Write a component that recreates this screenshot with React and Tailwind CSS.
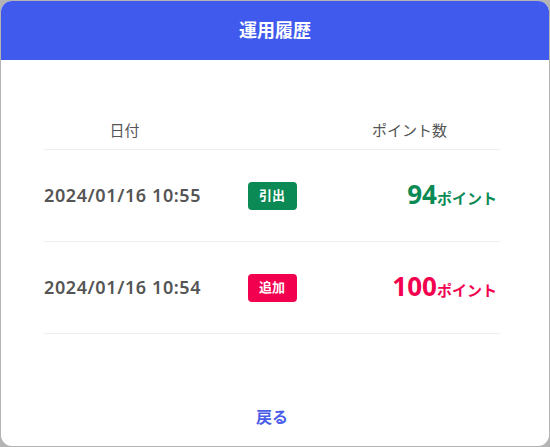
import React from 'react';

const rows = [
  { date: '2024/01/16 10:55', type: '引出', points: 94, tone: 'green' },
  { date: '2024/01/16 10:54', type: '追加', points: 100, tone: 'red' },
];

const font = { fontFamily: '"Noto Sans", "Noto Sans CJK JP", sans-serif' };

const App = () => {
  return (
    <div className="h-[447px] w-[550px] bg-[#b4b4b4] p-px" style={font}>
      <div className="flex h-full flex-col overflow-hidden rounded-[11px] bg-white">
        {/* Header */}
        <div className="flex h-[59px] shrink-0 items-center justify-center bg-[#405aee]">
          <h1 className="text-[18px] font-bold text-white">運用履歴</h1>
        </div>

        {/* Table */}
        <div className="pl-[43px] pr-[49px] pt-[59px]">
          <div className="grid grid-cols-[161px_134px_1fr] border-b border-[#efefef] pb-[8px] text-[15px] text-[#555]">
            <div className="text-center leading-[22px]">日付</div>
            <div />
            <div className="pr-5 text-center leading-[22px]">ポイント数</div>
          </div>
          {rows.map((row) => (
            <div
              key={row.date}
              className="grid h-[92px] grid-cols-[161px_134px_1fr] items-center border-b border-[#efefef]"
            >
              <div className="whitespace-nowrap text-[18px] font-semibold tracking-[0.6px] text-[#555]">{row.date}</div>
              <div className="flex justify-center">
                <span
                  className={
                    row.tone === 'green'
                      ? 'flex h-[28px] w-[49px] items-center justify-center rounded-[4px] bg-[#0b8a55] text-[13px] font-bold text-white'
                      : 'flex h-[28px] w-[49px] items-center justify-center rounded-[4px] bg-[#f2004f] text-[13px] font-bold text-white'
                  }
                >
                  {row.type}
                </span>
              </div>
              <div
                className={
                  row.tone === 'green'
                    ? 'flex items-baseline justify-end pr-[3px] text-[#0b8a55]'
                    : 'flex items-baseline justify-end pr-[3px] text-[#f2004f]'
                }
              >
                <span className="text-[26px] font-bold leading-none">{row.points}</span>
                <span className="text-[15px] font-bold">ポイント</span>
              </div>
            </div>
          ))}
        </div>

        {/* Footer */}
        <div className="mt-auto flex justify-center pb-[17px] pr-[6px]">
          <button className="text-[16px] font-bold text-[#4a5de8]">戻る</button>
        </div>
      </div>
    </div>
  );
};

export default App;
